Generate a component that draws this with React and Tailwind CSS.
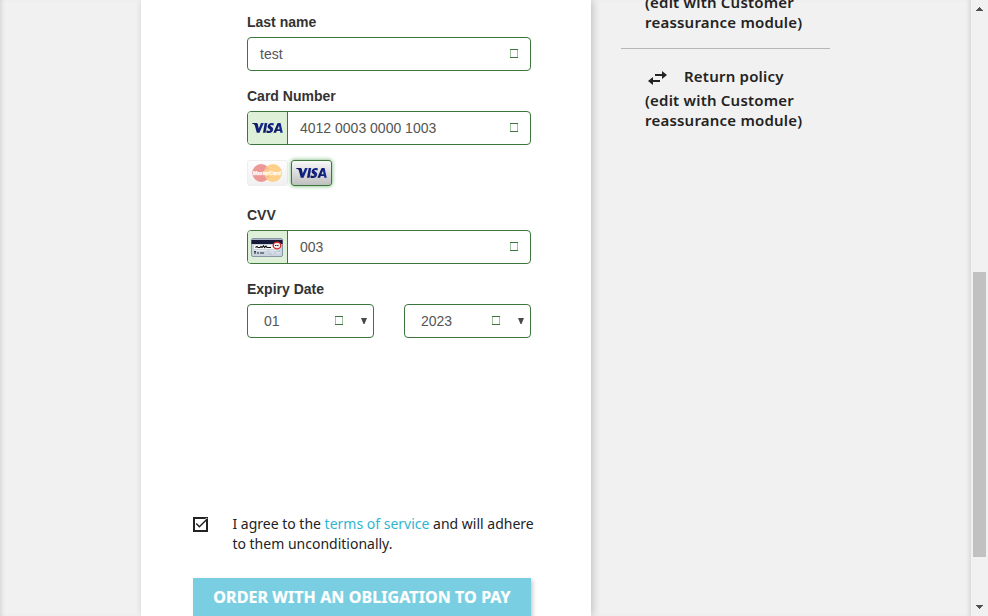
const sans = "font-['Liberation_Sans',Arial,sans-serif]";
const noto = "font-['Noto_Sans','Open_Sans',sans-serif]";

function Label({ children }) {
  return <div className={`h-[25px] text-[14px] leading-[20px] font-bold text-[#333333] ${sans}`}>{children}</div>;
}

function ValidMark({ className = '' }) {
  return (
    <svg className={`shrink-0 ${className}`} width="8" height="9" viewBox="0 0 8 9" fill="none" shapeRendering="crispEdges">
      <path d="M.5 0V9M7.5 0V9" stroke="#9fc3a0" />
      <path d="M0 .5H8M0 8.5H8" stroke="#3c763d" />
    </svg>
  );
}

function VisaLogo({ className = '' }) {
  return (
    <svg className={className} width="31" height="12" viewBox="0 0 31 12">
      <defs>
        <linearGradient id="visaBlue" x1="0" x2="1">
          <stop offset="0" stopColor="#14144f" />
          <stop offset="0.5" stopColor="#111f78" />
          <stop offset="1" stopColor="#1434a0" />
        </linearGradient>
      </defs>
      <g fill="url(#visaBlue)">
        <path d="M0 1.1H4.6Q5.5 1.2 5.8 2L6.8 6.6L9 1.1H11.8L7.5 10.7H4.8L2.7 3.1Q1.6 1.9 0 1.5Z" />
        <path d="M12.7 1.1H15.3L13.6 10.7H11Z" />
        <path d="M21.9 1.3L21.5 3.5Q20.4 3 19.4 3Q18.3 3 18.2 3.6Q18.2 4 19.6 4.7Q21.5 5.7 21.2 7.5Q20.7 10.8 17 10.9Q15.4 10.9 14.3 10.4L14.7 8.2Q16 8.9 17.1 8.9Q18.3 8.9 18.5 8.1Q18.6 7.6 17.2 6.9Q15.3 5.9 15.6 4.2Q16.2 1 19.9.9Q21.1.9 21.9 1.3Z" />
        <path fillRule="evenodd" d="M26.1 1.1H28.6L30.8 10.7H28.3L28 9.1H24.7L24.1 10.7H21.4L25.2 1.8Q25.5 1.2 26.1 1.1ZM27 3.8L25.4 7.2H27.6Z" />
      </g>
    </svg>
  );
}

function MasterCard() {
  return (
    <svg className="-ml-[2px] overflow-visible" width="32" height="20" viewBox="0 0 32 20">
      <circle cx="10.2" cy="10" r="9" fill="#ee9797" />
      <circle cx="22" cy="10" r="9" fill="#ffd08c" />
      <path d="M14 6H18M13.5 14H18" stroke="#f0a68f" strokeWidth=".8" />
      <text x="1.8" y="12.2" textLength="28" lengthAdjust="spacingAndGlyphs" fontFamily="Liberation Sans" fontSize="6" fontWeight="bold" fontStyle="italic" fill="#fff" stroke="#fff" strokeWidth=".25">MasterCard</text>
    </svg>
  );
}

function CvvCard() {
  return (
    <svg className="-ml-px" width="32" height="19" viewBox="0 0 32 19">
      <rect x=".5" y=".5" width="31" height="18" rx="1.5" fill="#cbd5df" stroke="#8795a6" />
      <path d="M1 1H31V2H1Z" fill="#a8b4c6" />
      <path d="M.5 2H31.5V6H.5Z" fill="#171938" />
      <path d="M3 7H23V11H3Z" fill="#f4f4f5" />
      <path d="M4.5 9.5L6 8.4L7 9.5H9L10 8.5L11 9.5L12.5 7.8L13.5 9.5L15 8L16 9.5H20" fill="none" stroke="#111" strokeWidth="1.1" />
      <path d="M3 12.5H16M19 12.5H28M19 15H29" stroke="#e4e8ed" />
      <path d="M3 15H5M6 15H8M9 15H13M3 13.6H5" stroke="#1d2534" />
      <path d="M18 16H21M23 15H25M26 13H29" stroke="#b0bbc7" />
      <ellipse cx="26" cy="7.5" rx="3.8" ry="3.3" fill="#f8eeee" stroke="#dc1e25" strokeWidth="1.3" />
      <path d="M24 7.5H28" stroke="#292332" strokeWidth="1" strokeDasharray="1.4 .5" />
    </svg>
  );
}

function Field({ addon, value }) {
  return (
    <div className={`flex h-[34px] w-[284px] items-center overflow-hidden rounded-[4px] border border-[#3c763d] bg-white text-[14px] text-[#555555] ${sans}`}>
      {addon && <div className="flex h-full w-[40px] shrink-0 items-center justify-center border-r border-[#3c763d] bg-[#dff0d8]">{addon}</div>}
      <span className="flex-1 pl-3">{value}</span>
      <ValidMark className="mr-3 mb-px" />
    </div>
  );
}

function Select({ value }) {
  return (
    <div className={`flex h-[34px] w-[127px] items-center rounded-[4px] border border-[#3c763d] bg-white pl-4 text-[14px] text-[#555555] ${sans}`}>
      <span className="flex-1">{value}</span>
      <ValidMark className="mb-px" />
      <svg className="mr-[6px] ml-[18px]" width="6" height="6" viewBox="0 0 6 6"><path d="M0 0H6L3.5 6H2.5Z" fill="#4a4a4a" /></svg>
    </div>
  );
}

function Checkbox() {
  return (
    <svg className="mt-[3px] shrink-0 overflow-visible" width="15" height="15" viewBox="0 0 15 15" fill="none">
      <rect x="1" y="1" width="13" height="13" stroke="#232323" strokeWidth="2" />
      <path d="M3.2 6.5L6.4 9.7L14.5 1.7" stroke="#fff" strokeWidth="3" />
      <path d="M14 2V13" stroke="#232323" strokeWidth="2" />
      <path d="M3.2 6.5L6.4 9.7L14.2 2" stroke="#232323" strokeWidth="1.5" />
    </svg>
  );
}

function SwapIcon() {
  return (
    <svg className="mt-[5px] ml-[3px] shrink-0" width="19" height="14" viewBox="0 0 19 14" fill="#232323">
      <path d="M7 3H14V0L19 4L14 8V5H7Z" />
      <path d="M12 9H5V6L0 10L5 14V11H12Z" />
    </svg>
  );
}

export default function App() {
  return (
    <div className="flex h-[616px] w-[988px] overflow-hidden bg-[#f1f1f1]">
      <div className="flex w-[971px] shrink-0 overflow-hidden shadow-[inset_5px_0_5px_-4px_rgba(0,0,0,0.14),inset_-5px_0_5px_-4px_rgba(0,0,0,0.14)]">
        <main className="ml-[141px] w-[450px] shrink-0 bg-white shadow-[2px_0_8px_0_rgba(0,0,0,0.2)]">
          <div className="ml-[106px] flex h-[514px] w-[284px] flex-col pt-3">
            <Label>Last name</Label>
            <Field value="test" />
            <div className="h-[15px]" />
            <Label>Card Number</Label>
            <Field addon={<VisaLogo />} value="4012 0003 0000 1003" />
            <div className="mt-[15px] flex h-[26px] gap-[3px]">
              <div className="flex w-[41px] items-center justify-center rounded-[3px] border border-[#eeeeee] bg-linear-to-b from-[#fdfdfd] to-[#f0f0f0]"><MasterCard /></div>
              <div className="flex w-[41px] items-center justify-center rounded-[3px] border border-[#3c763d] bg-linear-to-b from-[#f8f8f8] to-[#c0c0c0] shadow-[0_0_4px_#67b168]"><VisaLogo /></div>
            </div>
            <div className="h-[19px]" />
            <Label>CVV</Label>
            <Field addon={<CvvCard />} value="003" />
            <div className="h-[15px]" />
            <Label>Expiry Date</Label>
            <div className="flex justify-between">
              <Select value="01" />
              <Select value="2023" />
            </div>
          </div>
          <div className={`ml-[52px] flex h-[64px] text-[14px] leading-[20px] text-[#232323] ${noto}`}>
            <Checkbox />
            <p className="ml-[24.4px] whitespace-nowrap">
              I agree to the <a className="text-[#2fb5d2]">terms of service</a> and will adhere<br />to them unconditionally.
            </p>
          </div>
          <button className={`ml-[52px] flex h-[40px] w-[338px] items-start justify-center bg-[#79cfe1] pt-[7px] text-[16px] leading-[24px] font-bold tracking-[0.1px] whitespace-nowrap text-white shadow-[2px_2px_4px_0_rgba(0,0,0,0.2)] [-webkit-text-stroke:0.2px_white] ${noto}`}>
            ORDER WITH AN OBLIGATION TO PAY
          </button>
        </main>
        <aside className={`ml-[30px] h-[616px] w-[209px] text-[15px] leading-[20px] font-semibold tracking-[0.21px] whitespace-nowrap text-[#232323] ${noto}`}>
          <div className="-mt-[8px] h-[57px] border-b border-[#b6b6b6] pl-6">
            (edit with Customer<br />reassurance module)
          </div>
          <div className="pt-[17px] pl-6">
            <div className="flex h-[24px]">
              <SwapIcon />
              <span className="ml-[17px]">Return policy</span>
            </div>
            (edit with Customer<br />reassurance module)
          </div>
        </aside>
      </div>
      <div className="flex w-[17px] shrink-0 flex-col items-center bg-[#f1f1f1]">
        <svg className="mt-[7px]" width="7" height="4" viewBox="0 0 7 4" shapeRendering="crispEdges"><path d="M3 0H4V1H5V2H6V3H7V4H0V3H1V2H2V1H3Z" fill="#505050" /></svg>
        <div className="mt-[261px] h-[285px] w-[13px] bg-[#c1c1c1]" />
        <svg className="mt-[48px]" width="7" height="4" viewBox="0 0 7 4" shapeRendering="crispEdges"><path d="M0 0H7V1H6V2H5V3H4V4H3V3H2V2H1V1H0Z" fill="#505050" /></svg>
      </div>
    </div>
  );
}
